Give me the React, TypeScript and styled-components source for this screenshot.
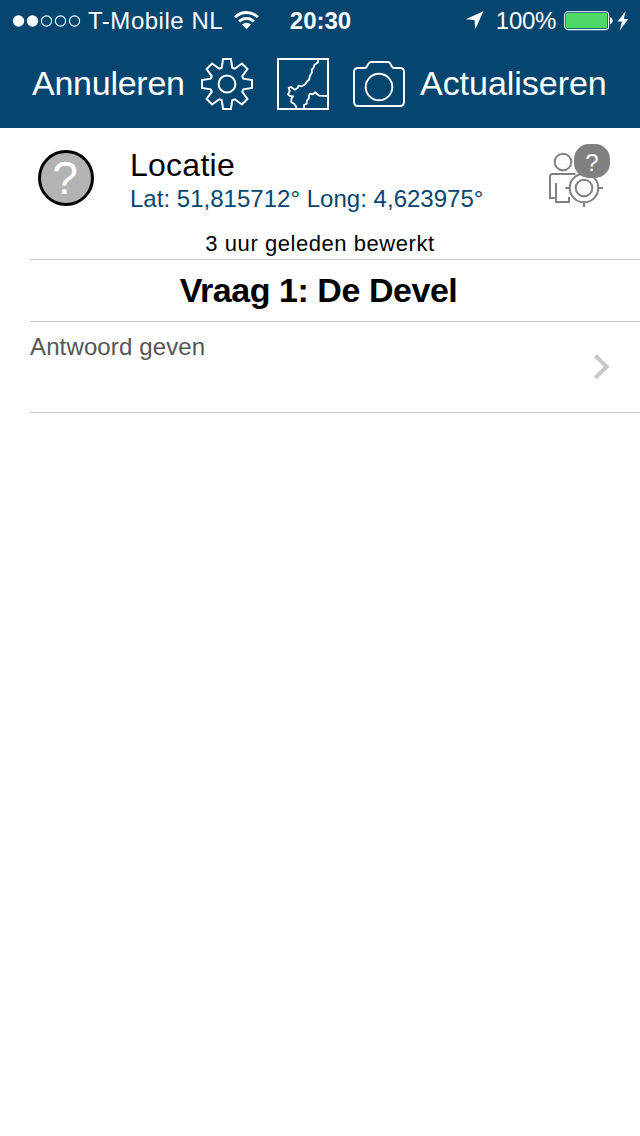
import React from 'react';
import styled, { createGlobalStyle } from 'styled-components';

const GlobalStyle = createGlobalStyle`
  * { box-sizing: border-box; }
  body { margin: 0; background: #fff; font-family: "Liberation Sans", Arial, sans-serif; }
  svg { display: block; flex: none; }
`;

const Screen = styled.main`
  width: 640px;
  height: 1136px;
  overflow: hidden;
  background: #fff;
`;

const Header = styled.header`
  height: 128px;
  background: #054670;
  color: #fff;
`;

const StatusBar = styled.div`
  display: flex;
  align-items: center;
  height: 40px;
  padding: 1px 11px 0 12px;
`;

const StatusSide = styled.div<{ $end?: boolean }>`
  flex: 1;
  display: flex;
  align-items: center;
  justify-content: ${(p) => (p.$end ? 'flex-end' : 'flex-start')};
`;

const Label = styled.span<{ $size: number; $spacing?: number; $bold?: boolean; $color?: string }>`
  font-size: ${(p) => p.$size}px;
  font-weight: ${(p) => (p.$bold ? 700 : 400)};
  letter-spacing: ${(p) => p.$spacing ?? 0}px;
  color: ${(p) => p.$color ?? 'inherit'};
  white-space: nowrap;
`;

const Carrier = styled(Label)`
  margin: 0 11px 0 7px;
`;

const Percent = styled(Label)`
  margin: 0 8px 0 12px;
`;

const NavBar = styled.nav`
  display: flex;
  align-items: center;
  height: 88px;
  padding: 0 32px;
`;

const NavButton = styled.button<{ $width: number; $spacing: number }>`
  width: ${(p) => p.$width}px;
  padding: 0 0 2px;
  border: 0;
  background: none;
  color: inherit;
  font: 34px/40px "Liberation Sans", Arial, sans-serif;
  letter-spacing: ${(p) => p.$spacing}px;
  text-align: left;
  white-space: nowrap;
`;

const NavIcons = styled.div`
  display: flex;
  align-items: center;
  gap: 24px;
  margin: 0 15px 0 17px;
`;

const LocationRow = styled.section`
  display: flex;
  height: 101px;
  padding: 15px 30px 0 38px;
`;

const UnknownMark = styled.div`
  flex: none;
  display: flex;
  align-items: center;
  justify-content: center;
  width: 56px;
  height: 56px;
  margin-top: 7px;
  padding-right: 2px;
  border: 3px solid #000;
  border-radius: 50%;
  background: #b3b3b3;
  color: #fff;
  font-size: 46px;
  line-height: 50px;
`;

const LocationText = styled.div`
  flex: 1;
  display: flex;
  flex-direction: column;
  margin-left: 36px;
  padding-top: 3px;
`;

const LocationTitle = styled(Label)`
  line-height: 38px;
`;

const Coordinates = styled(Label)`
  line-height: 30px;
`;

const TrackerIcon = styled.div`
  position: relative;
  width: 65px;
  height: 70px;
  margin-top: -3px;
`;

const Badge = styled.span`
  position: absolute;
  top: 4px;
  right: 0;
  width: 36px;
  height: 34px;
  border-radius: 15px;
  background: #808080;
  color: #fff;
  font-size: 24px;
  line-height: 37px;
  text-align: center;
`;

const Edited = styled.p`
  height: 30px;
  margin: 0;
  line-height: 29px;
  text-align: center;
`;

const ListItem = styled.div<{ $height: number; $centered?: boolean }>`
  display: flex;
  justify-content: ${(p) => (p.$centered ? 'center' : 'space-between')};
  height: ${(p) => p.$height}px;
  margin-left: 30px;
  padding-right: ${(p) => (p.$centered ? 33 : 30)}px;
  border-top: 1px solid #c8c7cc;
  line-height: ${(p) => (p.$centered ? 60 : 50)}px;
  &:last-child { border-bottom: 1px solid #c8c7cc; }
`;

const Arrow = styled.div`
  display: flex;
  align-items: center;
`;

const SignalDots = () => (
  <svg width="69" height="14" viewBox="0 0 69 14">
    {[0, 1, 2, 3, 4].map((i) => (
      <circle key={i} cx={6.5 + i * 14} cy="7" r={i < 2 ? 5.7 : 5.1} fill={i < 2 ? '#fff' : 'none'} stroke={i < 2 ? 'none' : '#fff'} strokeWidth="1.1" />
    ))}
  </svg>
);

const Wifi = () => (
  <svg width="25" height="19" viewBox="0 0 25 19">
    <g fill="none" stroke="#fff" strokeWidth="2.9">
      <path d="M1.2 6.2a16 16 0 0 1 22.6 0" />
      <path d="M5.2 10.4a10.3 10.3 0 0 1 14.6 0" />
    </g>
    <path d="M8 13.6a6.4 6.4 0 0 1 9 0L12.5 18.3z" fill="#fff" />
  </svg>
);

const LocationArrow = () => (
  <svg width="19" height="19" viewBox="0 0 19 19">
    <path d="M18.4 0.2L0.7 8.3L9.5 9L10.3 18.3z" fill="#fff" />
  </svg>
);

const Battery = () => (
  <svg width="65" height="20" viewBox="0 0 65 20">
    <rect x="0.7" y="0.7" width="43.9" height="17.9" rx="3" fill="none" stroke="#fff" strokeWidth="1.1" />
    <rect x="2" y="2" width="41.3" height="15.3" rx="1.6" fill="#4cd964" />
    <path d="M46 6.2c3.6 0.7 3.6 6.2 0 6.9z" fill="#fff" />
    <path d="M61.6 0L53.6 10.5h4.3L55.8 19.6L64.2 8h-4.4z" fill="#fff" />
  </svg>
);

const gearPath = () => {
  const points: string[] = [];
  for (let tooth = 0; tooth < 8; tooth++) {
    const a = (tooth * Math.PI) / 4;
    [[-5.3, -16.3], [-3.9, -25], [3.9, -25], [5.3, -16.3]].forEach(([x, y]) => {
      const px = 26 + x * Math.cos(a) - y * Math.sin(a);
      const py = 26 + x * Math.sin(a) + y * Math.cos(a);
      points.push(`${px.toFixed(2)} ${py.toFixed(2)}`);
    });
  }
  return `M${points.join('L')}Z`;
};

const Gear = () => (
  <svg width="52" height="52" viewBox="0 0 52 52" fill="none" stroke="#fff" strokeWidth="2">
    <path d={gearPath()} />
    <circle cx="26" cy="26" r="8.4" />
  </svg>
);

const MapIcon = () => (
  <svg width="52" height="52" viewBox="0 0 52 52" fill="none" stroke="#fff" strokeWidth="2">
    <rect x="1" y="1" width="50" height="50" />
    <path strokeWidth="1.8" strokeLinejoin="round" d="M41 2L41 4.3L37.3 7L36.7 9.7L34.7 11.7L35 14.3L33 17.7L32 21.7L29.7 23.7L28.3 26.3L24.7 28.3L21.7 27.7L20.3 30.3L17.7 31.7L15.7 30.3L14.3 29L11.7 29.7L12.7 33L11 36.3L13 38L16.3 38.3L14.3 41L14.3 44.3L17 45.7L19 48.3L19.3 51" />
    <path strokeWidth="1.8" strokeLinejoin="round" d="M27 51L27 47L29.7 45.7L30 42.3L32 40.3L31.7 37.7L33 35.7L36 36.3L38.3 34.3L40.3 36.3L42.3 37.7L51 38" />
  </svg>
);

const Camera = () => (
  <svg width="52" height="46" viewBox="0 0 52 46" fill="none" stroke="#fff" strokeWidth="1.9">
    <path d="M5 7h6.5q1.5 0 2.2-1.2l2.2-3.6Q16.7 1 18 1h17q1.3 0 2 1.2l2 3.6Q39.7 7 41.2 7H47q4 0 4 4v30q0 4-4 4H5q-4 0-4-4V11q0-4 4-4z" />
    <circle cx="26" cy="26" r="13.3" />
  </svg>
);

const Tracker = () => (
  <svg width="65" height="70" viewBox="0 0 65 70" fill="none" stroke="#808080" strokeWidth="2">
    <circle cx="18" cy="22" r="8.3" />
    <path d="M9.7 58H5V36.5Q5 34 7.5 34H30.5M11 43V62H24V57" />
    <circle cx="39" cy="48" r="14.3" />
    <circle cx="39" cy="48" r="8.3" />
    <path d="M20.3 48H25M53 48H58M39 62V67" />
  </svg>
);

const Chevron = () => (
  <svg width="17" height="26" viewBox="0 0 17 26">
    <path d="M2.3 1.6L13.7 12.7L2.3 23.8" fill="none" stroke="#c7c7cc" strokeWidth="4" />
  </svg>
);

export default function App() {
  return (
    <>
      <GlobalStyle />
      <Screen>
        <Header>
          <StatusBar>
            <StatusSide>
              <SignalDots />
              <Carrier $size={24} $spacing={0.52}>T-Mobile NL</Carrier>
              <Wifi />
            </StatusSide>
            <Label $size={24} $bold>20:30</Label>
            <StatusSide $end>
              <LocationArrow />
              <Percent $size={24} $spacing={-0.3}>100%</Percent>
              <Battery />
            </StatusSide>
          </StatusBar>
          <NavBar>
            <NavButton $width={152} $spacing={-0.25}>Annuleren</NavButton>
            <NavIcons>
              <Gear />
              <MapIcon />
              <Camera />
            </NavIcons>
            <NavButton $width={188} $spacing={-0.03}>Actualiseren</NavButton>
          </NavBar>
        </Header>
        <LocationRow>
          <UnknownMark>?</UnknownMark>
          <LocationText>
            <LocationTitle $size={32} $spacing={0.25} $color="#000">Locatie</LocationTitle>
            <Coordinates $size={24} $spacing={0.02} $color="#054670">Lat: 51,815712° Long: 4,623975°</Coordinates>
          </LocationText>
          <TrackerIcon>
            <Tracker />
            <Badge>?</Badge>
          </TrackerIcon>
        </LocationRow>
        <Edited>
          <Label $size={22} $spacing={0.55}>3 uur geleden bewerkt</Label>
        </Edited>
        <ListItem $height={62} $centered>
          <Label $size={34} $spacing={-0.45} $bold>Vraag 1: De Devel</Label>
        </ListItem>
        <ListItem $height={92}>
          <Label $size={24} $spacing={0.13} $color="#555">Antwoord geven</Label>
          <Arrow><Chevron /></Arrow>
        </ListItem>
      </Screen>
    </>
  );
}
